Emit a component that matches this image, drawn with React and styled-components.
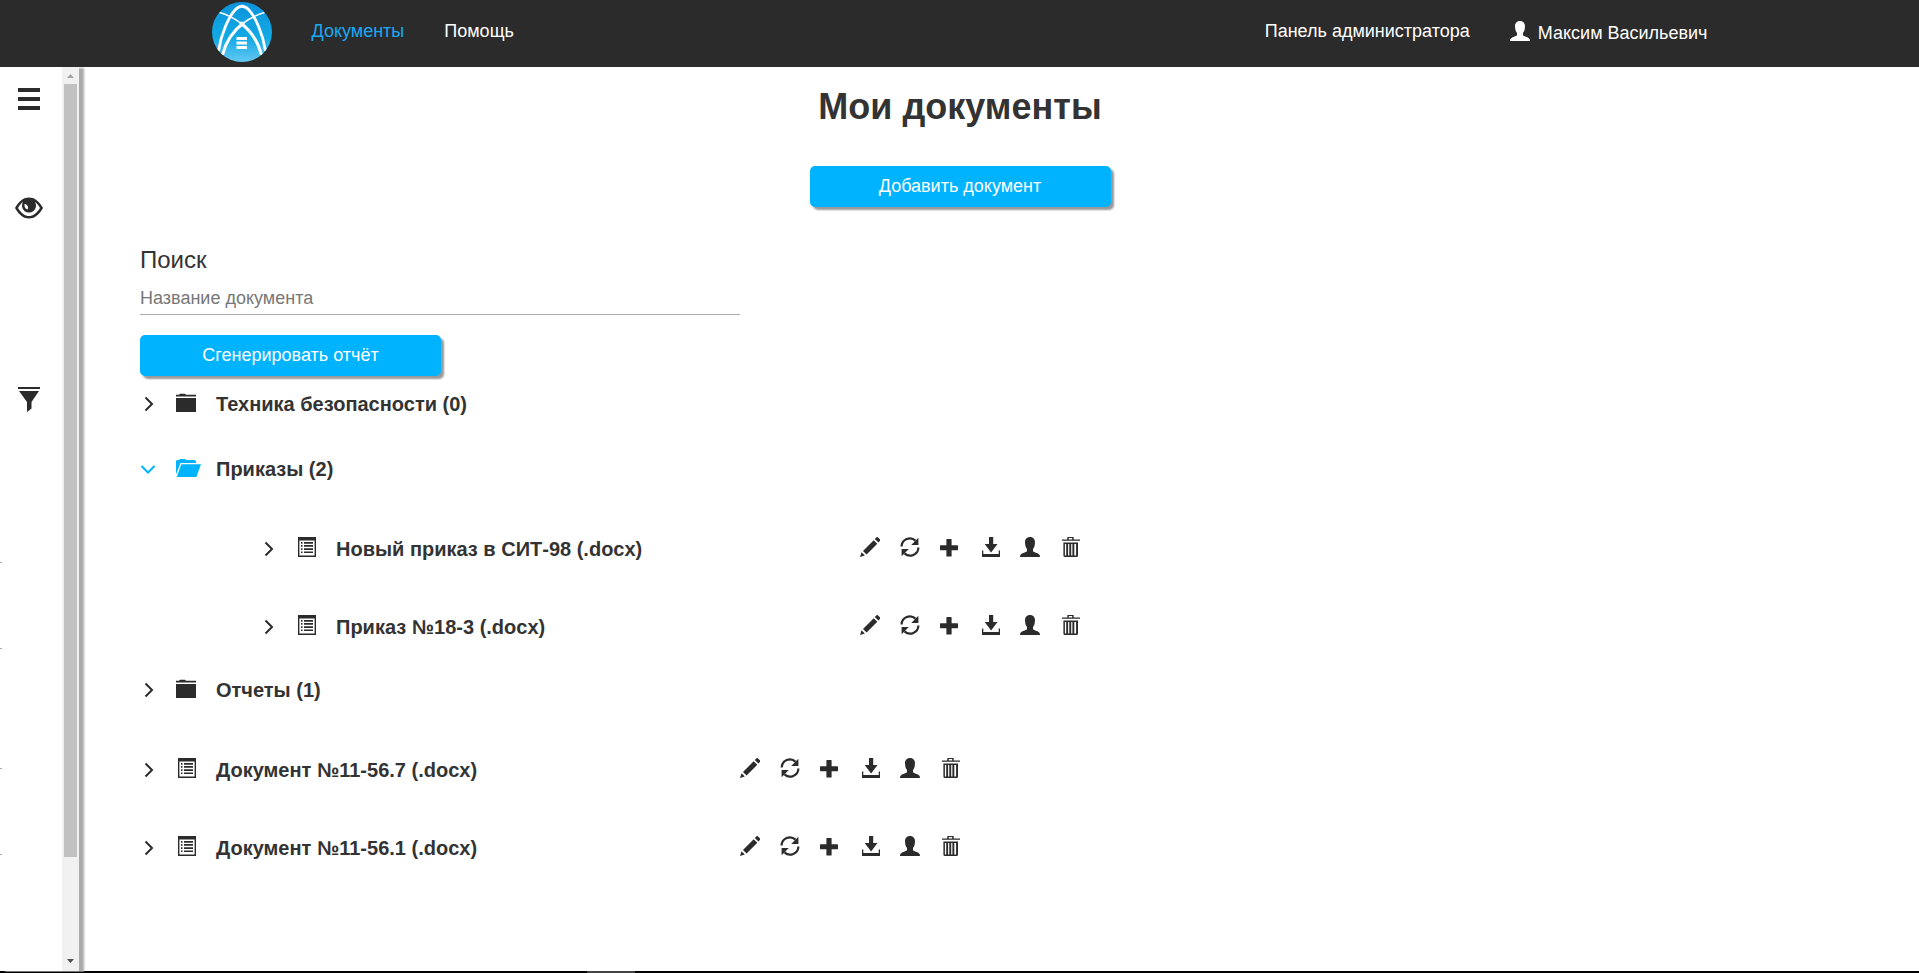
import React from "react";
import styled, { createGlobalStyle } from "styled-components";

const INK = "#2b2b2b";
const BLUE = "#00b3ff";

const GlobalStyle = createGlobalStyle`
  *, *::before, *::after { box-sizing: border-box; }
  body {
    margin: 0;
    background: #fff;
    color: #333;
    font-family: "Liberation Sans", Arial, sans-serif;
    font-size: 18px;
    line-height: 24px;
  }
  h1, h2, ul, p { margin: 0; padding: 0; }
  ul { list-style: none; }
  button, input { font: inherit; }
`;

const Page = styled.div`
  display: flex;
  flex-direction: column;
  min-height: 100vh;
`;

const Header = styled.header`
  flex: none;
  height: 67px;
  background: ${INK};
`;

const HeaderInner = styled.div`
  display: flex;
  align-items: flex-start;
  max-width: 1496px;
  margin: 0 auto;
  padding-top: 2px;
`;

const LogoLink = styled.a`
  display: block;
  height: 60px;
  margin-right: 40px;
`;

const Nav = styled.nav`
  display: flex;
  gap: 40px;
  padding-top: 17px;
`;

const AccountNav = styled(Nav)`
  margin-left: auto;
`;

const NavLink = styled.a`
  display: flex;
  gap: 8px;
  color: ${(p) => (p.$active ? "#19a9f5" : "#fff")};
  text-decoration: none;
`;

const UserLink = styled(NavLink)`
  padding-top: 2px;
`;

const Body = styled.div`
  display: flex;
  flex: 1;
`;

const Sidebar = styled.aside`
  display: flex;
  flex: none;
  width: 79px;
  box-shadow: 5px 1px 2px #aaa;
  clip-path: inset(0 -10px -1px 0);
`;

const SideTools = styled.div`
  display: flex;
  flex-direction: column;
  flex: 1;
`;

const SideButton = styled.button`
  display: block;
  width: 32px;
  height: 32px;
  margin: ${(p) => p.$top}px 0 0 13px;
  padding: 0;
  border: 0;
  background: none;
  color: ${INK};
  cursor: pointer;

  svg { display: block; }
`;

const FieldEdge = styled.span`
  width: 2px;
  height: 1px;
  margin-top: ${(p) => p.$top}px;
  background: #aaa;
`;

const Scrollbar = styled.div`
  display: flex;
  flex-direction: column;
  width: 17px;
  padding-bottom: 2px;
  background: #f1f1f1;
`;

const ScrollArrow = styled.span`
  display: flex;
  align-items: center;
  justify-content: center;
  height: 17px;
  color: ${(p) => (p.$muted ? "#a3a3a3" : "#505050")};
`;

const ScrollTrack = styled.div`
  flex: 1;
  display: flex;
  flex-direction: column;
  padding: 0 2px;
`;

const ScrollThumb = styled.div`
  flex: 0 0 89%;
  background: #c1c1c1;
`;

const Main = styled.main`
  flex: 1;
  padding: 20px 139px 40px 61px;
`;

const Intro = styled.section`
  display: flex;
  flex-direction: column;
  align-items: center;
`;

const Title = styled.h1`
  font-size: 36px;
  line-height: 40px;
  margin-bottom: 39px;
`;

const PrimaryButton = styled.button`
  display: block;
  width: 301px;
  height: 41px;
  padding: 0 0 2px;
  border: 0;
  border-radius: 5px;
  background: ${BLUE};
  box-shadow: 3px 3px 2px #999;
  color: #fff;
  cursor: pointer;
`;

const SearchForm = styled.form`
  display: flex;
  flex-direction: column;
  align-items: flex-start;
  margin: 37px 0 8px;
`;

const SearchLabel = styled.label`
  font-size: 24px;
  line-height: 32px;
`;

const SearchInput = styled.input`
  width: 100%;
  max-width: 600px;
  height: 39px;
  margin-bottom: 20px;
  padding: 8px 0 2px;
  border: 0;
  border-bottom: 1px solid #aaa;
  background: none;
  color: #333;
  outline: none;

  &::placeholder { color: #777; opacity: 1; }
`;

const Row = styled.div`
  display: grid;
  grid-template-columns: 36px 40px 524px auto;
  justify-content: start;
  align-items: start;
  height: ${(p) => (p.$folder ? 65 : 78)}px;
  padding-top: ${(p) => (p.$folder ? 8 : 23)}px;
`;

const SubTree = styled.ul`
  padding-left: 120px;
`;

const IconButton = styled.button`
  display: block;
  height: 24px;
  padding: 0;
  border: 0;
  background: none;
  color: ${(p) => (p.$open ? BLUE : INK)};
  text-align: left;
  cursor: pointer;

  svg { display: block; }
`;

const KindIcon = styled.span`
  color: ${(p) => (p.$open ? BLUE : INK)};

  svg { display: block; }
`;

const RowName = styled.h2`
  font-size: 20px;
  line-height: 24px;
  white-space: nowrap;
`;

const Actions = styled.div`
  display: flex;
  gap: 20px;
`;

const BottomBar = styled.footer`
  display: flex;
  flex: none;
  height: 2px;
  padding-left: 30.6%;
  background: #000;
`;

const BottomBarMark = styled.span`
  width: 48px;
  background: #444;
`;

function Glyph({ width = 20, children }) {
  return (
    <svg width={width} height="24" viewBox={`0 0 ${width} 24`} fill="currentColor" aria-hidden="true">
      {children}
    </svg>
  );
}

const UserGlyph = () => (
  <Glyph>
    <path d="M10 0C6.9 0 5 2.1 5 5.2c0 .7.2 1.300.2 2 .1 2.300.9 3.600 1.800 4.700v2.100c0 1-3.500 1.700-5.200 2.700C.7 17.400 0 18.200 0 20h20c0-1.800-.7-2.600-1.800-3.300-1.700-1-5.200-1.700-5.200-2.700v-2.100c.9-1.100 1.700-2.400 1.800-4.700 0-.7.2-1.300.2-2C15 2.100 13.100 0 10 0z" />
  </Glyph>
);

const PencilGlyph = () => (
  <Glyph>
    <path d="M0 20l1.600-4.800 3.200 3.200zM3 13.900L13.700 3.200l3.600 3.600L6.600 17.500zM14.800 2.100L16.400.4c.5-.5 1.100-.5 1.600 0l1.900 1.900c.5.5.5 1.100 0 1.600l-1.500 1.700z" />
  </Glyph>
);

const RefreshGlyph = () => (
  <Glyph>
    <path d="M1.600 9.500A8.300 8.300 0 0 1 15.500 3.600M18.400 10.500A8.300 8.300 0 0 1 4.500 16.400" fill="none" stroke="currentColor" strokeWidth="2.200" />
    <path d="M18.400.8V8h-7.200zM1.600 19.200V12h7.200z" />
  </Glyph>
);

const PlusGlyph = () => (
  <Glyph>
    <path d="M7 2h4q.6 0 .6.600v5.700h5.800q.600 0 .600.600v3.700q0 .600-.600.600h-5.800v5.700q0 .600-.600.600H7q-.6 0-.6-.600v-5.700H.6q-.6 0-.6-.600V8.900q0-.6.600-.6h5.800V2.600q0-.6.600-.6z" />
  </Glyph>
);

const DownloadGlyph = () => (
  <Glyph>
    <path d="M9 0h4.200v7h4.300L11.100 15.500 4.700 7H9z" />
    <path d="M2 13.500h1.300V17h15.400v-3.500H20V20H2z" />
  </Glyph>
);

const TrashGlyph = () => (
  <Glyph>
    <path d="M7.300 2.500V.6Q7.300-.5 8.400-.5h4.200q1.100 0 1.100 1.100v1.900H20v1.300H2V2.500zM8.800 2.500h3.400V.9H8.800z" fillRule="evenodd" />
    <path d="M3.400 5.500H18v13q0 1.500-1.500 1.500H4.900q-1.500 0-1.500-1.500zM4.900 7v11.600h1.300V7zm3.200 0v11.600h1.200V7zm3.100 0v11.600h1.200V7zm3.100 0v11.600h1.800V7z" fillRule="evenodd" />
  </Glyph>
);

const ListGlyph = () => (
  <Glyph>
    <path d="M2 0h18v20H2zM3.400 3.500v15h15.200v-15z" fillRule="evenodd" />
    <path d="M5 5h1.500v1.700H5zM8 5h9v1.700H8zM5 8.100h1.500v1.700H5zM8 8.100h9v1.700H8zM5 11.200h1.500v1.700H5zM8 11.200h9v1.700H8zM5 14.400h1.500v1.700H5zM8 14.400h9v1.700H8z" />
  </Glyph>
);

const FolderGlyph = () => (
  <Glyph>
    <path d="M0 4.500V2.800h3l1-1h5l1 1h10v1.700zM0 6h20v14H0z" />
  </Glyph>
);

const FolderOpenGlyph = () => (
  <Glyph width={25}>
    <path d="M0 17.500V4l1-1h2l1-1h5l1 1h9l1 1.500V6H4.500z" />
    <path d="M5.300 7.300H25L20.400 20H.8z" />
  </Glyph>
);

const ChevronGlyph = ({ open }) => (
  <Glyph>
    <path d={open ? "M1.500 9l6.500 6.500L14.500 9" : "M5.500 5.500l6.500 6.500L5.500 18.500"} fill="none" stroke="currentColor" strokeWidth="2" />
  </Glyph>
);

function Logo() {
  return (
    <svg width="60" height="60" viewBox="0 0 60 60" role="img" aria-label="Главная">
      <defs>
        <linearGradient id="logoSky" x1="0" y1="0" x2="0" y2="1">
          <stop offset="0" stopColor="#0c93dc" />
          <stop offset=".6" stopColor="#12aae4" />
          <stop offset="1" stopColor="#63c8f2" />
        </linearGradient>
        <clipPath id="logoDisc"><circle cx="30" cy="30" r="30" /></clipPath>
      </defs>
      <circle cx="30" cy="30" r="30" fill="url(#logoSky)" />
      <g fill="none" stroke="#fff" clipPath="url(#logoDisc)">
        <path d="M6.500 49C9 32 17 14 23.500 7.500Q30 1 36.500 7.500C43 14 51 32 53.500 49" strokeWidth="2.800" />
        <path d="M10.500 53C14 39 22 28 32 20.500" strokeWidth="3" />
        <path d="M49.500 53C46 39 38 28 28 20.500" strokeWidth="3" />
        <path d="M30 22C36 17.500 43 13 52.500 10.500M30 22C24 17.500 17 13 7.500 10.500" strokeWidth="1.500" />
      </g>
      <path d="M24.500 35h10.500v3H24.500zM24.500 39.500h10.500v3H24.500zM24.500 44h10.500v3H24.500z" fill="#fff" />
    </svg>
  );
}

const MenuIcon = () => (
  <svg width="32" height="32" viewBox="0 0 32 32" fill="currentColor" aria-hidden="true">
    <path d="M5 5h22v4H5zM5 14h22v4H5zM5 23h22v4H5z" />
  </svg>
);

const EyeIcon = () => (
  <svg width="32" height="32" viewBox="0 0 32 32" aria-hidden="true">
    <path
      d="M2 16C6 8.500 11 5.500 16 5.500S26 8.500 30 16C26 23.500 21 26.500 16 26.500S6 23.500 2 16zM5 16C8.500 21.500 12 24 16 24S23.500 21.500 27 16C25.500 13.200 23.800 11.200 22 10A7 7 0 1 1 10 10C8.200 11.200 6.500 13.200 5 16z"
      fill="currentColor"
      fillRule="evenodd"
    />
    <circle cx="16" cy="13.500" r="6.500" fill="currentColor" />
    <path d="M11.500 12q2 0 3.200 2t-.4 3.600q-3.200-1.400-2.800-5.600z" fill="#fff" />
  </svg>
);

const FilterIcon = () => (
  <svg width="32" height="32" viewBox="0 0 32 32" fill="currentColor" aria-hidden="true">
    <path d="M5 3h22v2H5zM6 7h20l-7.500 11v6.500L14 28V18z" />
  </svg>
);

const ACTIONS = [
  ["Редактировать", PencilGlyph],
  ["Обновить", RefreshGlyph],
  ["Добавить", PlusGlyph],
  ["Скачать", DownloadGlyph],
  ["Доступ", UserGlyph],
  ["Удалить", TrashGlyph],
];

const TREE = [
  { name: "Техника безопасности (0)", folder: true },
  {
    name: "Приказы (2)",
    folder: true,
    open: true,
    children: [{ name: "Новый приказ в СИТ-98 (.docx)" }, { name: "Приказ №18-3 (.docx)" }],
  },
  { name: "Отчеты (1)", folder: true },
  { name: "Документ №11-56.7 (.docx)" },
  { name: "Документ №11-56.1 (.docx)" },
];

function TreeNode({ node }) {
  const { name, folder, open, children } = node;
  return (
    <li>
      <Row $folder={folder}>
        <IconButton type="button" $open={open} aria-expanded={!!open} aria-label={name}>
          <ChevronGlyph open={open} />
        </IconButton>
        <KindIcon $open={open}>
          {folder ? open ? <FolderOpenGlyph /> : <FolderGlyph /> : <ListGlyph />}
        </KindIcon>
        <RowName>{name}</RowName>
        {!folder && (
          <Actions>
            {ACTIONS.map(([label, Icon]) => (
              <IconButton key={label} type="button" aria-label={label}>
                <Icon />
              </IconButton>
            ))}
          </Actions>
        )}
      </Row>
      {children && (
        <SubTree>
          {children.map((child) => <TreeNode key={child.name} node={child} />)}
        </SubTree>
      )}
    </li>
  );
}

export default function App() {
  return (
    <Page>
      <GlobalStyle />
      <Header>
        <HeaderInner>
          <LogoLink href="#"><Logo /></LogoLink>
          <Nav>
            <NavLink href="#documents" $active>Документы</NavLink>
            <NavLink href="#help">Помощь</NavLink>
          </Nav>
          <AccountNav>
            <NavLink href="#admin">Панель администратора</NavLink>
            <UserLink href="#account"><UserGlyph />Максим Васильевич</UserLink>
          </AccountNav>
        </HeaderInner>
      </Header>
      <Body>
        <Sidebar>
          <SideTools>
            <SideButton type="button" $top={16} aria-label="Меню"><MenuIcon /></SideButton>
            <SideButton type="button" $top={77} aria-label="Просмотр"><EyeIcon /></SideButton>
            <SideButton type="button" $top={160} aria-label="Фильтр"><FilterIcon /></SideButton>
            <FieldEdge $top={146} />
            <FieldEdge $top={85} />
            <FieldEdge $top={119} />
            <FieldEdge $top={85} />
          </SideTools>
          <Scrollbar>
            <ScrollArrow $muted>
              <svg width="7" height="4" viewBox="0 0 7 4" fill="currentColor"><path d="M0 4L3.500 0 7 4z" /></svg>
            </ScrollArrow>
            <ScrollTrack><ScrollThumb /></ScrollTrack>
            <ScrollArrow>
              <svg width="7" height="4" viewBox="0 0 7 4" fill="currentColor"><path d="M0 0h7L3.500 4z" /></svg>
            </ScrollArrow>
          </Scrollbar>
        </Sidebar>
        <Main>
          <Intro>
            <Title>Мои документы</Title>
            <PrimaryButton type="button">Добавить документ</PrimaryButton>
          </Intro>
          <SearchForm onSubmit={(e) => e.preventDefault()}>
            <SearchLabel htmlFor="document-search">Поиск</SearchLabel>
            <SearchInput id="document-search" type="text" placeholder="Название документа" />
            <PrimaryButton type="submit">Сгенерировать отчёт</PrimaryButton>
          </SearchForm>
          <ul>
            {TREE.map((node) => <TreeNode key={node.name} node={node} />)}
          </ul>
        </Main>
      </Body>
      <BottomBar><BottomBarMark /></BottomBar>
    </Page>
  );
}
